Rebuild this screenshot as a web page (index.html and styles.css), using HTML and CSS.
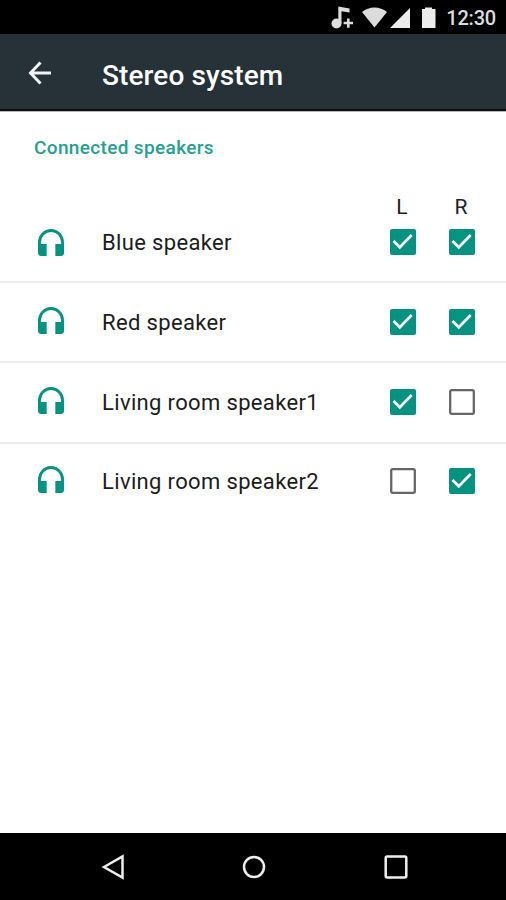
FILE: index.html
```html
<!DOCTYPE html>
<html lang="en">
<head>
    <meta charset="UTF-8">
    <meta name="viewport" content="width=device-width, initial-scale=1.0">
    <title>Stereo system</title>
    <link rel="stylesheet" href="styles.css">
</head>
<body>

    <!-- shared icons -->
    <svg class="symbols">
        <symbol id="headphones" viewBox="3 3 18 18" preserveAspectRatio="none">
            <path d="M12 3a9 9 0 0 0-9 9v7c0 1.1.9 2 2 2h4v-8H5v-1a7 7 0 0 1 14 0v1h-4v8h4c1.1 0 2-.9 2-2v-7a9 9 0 0 0-9-9z"/>
        </symbol>
        <symbol id="checked" viewBox="0 0 26 26">
            <rect width="26" height="26" rx="2" fill="#069281"/>
            <path d="M3.500 12l6.300 6.300L21.700 6" fill="none" stroke="#fff" stroke-width="2.700"/>
        </symbol>
        <symbol id="unchecked" viewBox="0 0 26 26">
            <rect x="1.200" y="1.200" width="23.600" height="23.600" rx="1.500" fill="none" stroke="#666" stroke-width="2.300"/>
        </symbol>
    </svg>

    <div class="screen">
        <div class="status-bar">
            <svg class="status-icons" width="108" height="34" viewBox="0 0 108 34">
                <g fill="#dcdcdc">
                    <circle cx="5.500" cy="23.500" r="5"/>
                    <path d="M7.300 6.500l11.200 2v4l-8-1.200V23.500H7.300z"/>
                    <path d="M16 18.500h2.600v3.200h3.400v2.600h-3.400v3.400H16v-3.400h-3.400v-2.600H16z"/>
                    <path d="M31 12C38 6 49 6 56 12L43.500 27.500z"/>
                </g>
                <path d="M79 8v20H59z" fill="#ececec"/>
                <path d="M91 9h3V7.500h7V9h3.500v19H91z" fill="#ececec"/>
            </svg>
            <span class="clock">12:30</span>
        </div>

        <div class="app-bar">
            <svg class="back" width="25" height="24" viewBox="0 0 25 24">
                <path d="M14.500 1.500L4.500 12l10 10.500M4.500 12h21.500" fill="none" stroke="#f0f2f3" stroke-width="3"/>
            </svg>
            <h1 class="title">Stereo system</h1>
        </div>

        <div class="content">
            <h2 class="subheader">Connected speakers</h2>

            <div class="channels">
                <span>L</span>
                <span>R</span>
            </div>

            <div class="speaker first">
                <svg class="headphones"><use href="#headphones"/></svg>
                <span class="name">Blue speaker</span>
                <svg class="box"><use href="#checked"/></svg>
                <svg class="box"><use href="#checked"/></svg>
            </div>
            <div class="speaker">
                <svg class="headphones"><use href="#headphones"/></svg>
                <span class="name">Red speaker</span>
                <svg class="box"><use href="#checked"/></svg>
                <svg class="box"><use href="#checked"/></svg>
            </div>
            <div class="speaker third">
                <svg class="headphones"><use href="#headphones"/></svg>
                <span class="name">Living room speaker1</span>
                <svg class="box"><use href="#checked"/></svg>
                <svg class="box"><use href="#unchecked"/></svg>
            </div>
            <div class="speaker last">
                <svg class="headphones"><use href="#headphones"/></svg>
                <span class="name">Living room speaker2</span>
                <svg class="box"><use href="#unchecked"/></svg>
                <svg class="box"><use href="#checked"/></svg>
            </div>
        </div>

        <div class="nav-bar">
            <svg width="24" height="26" viewBox="0 0 24 26">
                <path d="M3 13L21.500 2.500v21z"/>
            </svg>
            <svg width="24" height="26" viewBox="0 0 24 26">
                <circle cx="12" cy="13" r="10"/>
            </svg>
            <svg width="24" height="26" viewBox="0 0 24 26">
                <rect x="1.700" y="2.500" width="20.600" height="21" rx="1.500"/>
            </svg>
        </div>
    </div>

</body>
</html>
```
FILE: styles.css
```css
body {
    margin: 0;
    font-family: Roboto, "Liberation Sans", sans-serif;
}

.symbols {
    display: none;
}

.screen {
    display: flex;
    flex-direction: column;
    height: 900px;
    width: 506px;
    background-color: white;
    overflow: hidden;
}

.status-bar {
    display: flex;
    align-items: center;
    justify-content: flex-end;
    gap: 7px;
    height: 34px;
    padding-right: 10px;
    background-color: black;
}

.clock {
    color: #dcdcdc;
    font-size: 20px;
    font-weight: 500;
    letter-spacing: -0.2px;
    line-height: 34px;
    padding-top: 1px;
}

.app-bar {
    display: flex;
    align-items: center;
    box-sizing: border-box;
    height: 77px;
    padding-left: 26px;
    background-color: #263138;
    border-bottom: 2px solid #0b1013;
}

.back {
    margin-top: 3px;
}

.title {
    margin: 7px 0 0 51px;
    color: white;
    font-size: 28px;
    font-weight: 500;
    letter-spacing: 0.1px;
}

.content {
    flex: 1;
    border-top: 1px solid #b5b8ba;
}

.subheader {
    margin: 23px 0 0 34px;
    color: #26a08f;
    font-size: 19px;
    font-weight: 500;
    line-height: 26px;
    letter-spacing: 0.35px;
}

.channels {
    display: flex;
    justify-content: flex-end;
    gap: 33px;
    padding: 33px 32px 0 0;
    font-size: 21px;
    line-height: 26px;
    color: #222;
}

.channels span {
    width: 26px;
    text-align: center;
}

.speaker {
    display: grid;
    grid-template-columns: 64px 288px 59px 26px;
    align-items: center;
    box-sizing: border-box;
    height: 80px;
    padding-left: 38px;
    border-bottom: 2px solid #ececec;
}

.speaker.first {
    height: 63px;
    padding-bottom: 17px;
}

.speaker.third {
    height: 81px;
    padding-bottom: 1px;
}

.speaker.last {
    height: 74px;
    border-bottom: none;
}

.headphones {
    width: 26px;
    height: 27px;
    margin-bottom: 4px;
    fill: #069281;
}

.first .headphones {
    margin-bottom: 0;
}

.name {
    color: #1c1c1c;
    font-size: 22px;
    letter-spacing: 0.35px;
}

.box {
    width: 26px;
    height: 26px;
}

.nav-bar {
    display: flex;
    align-items: center;
    justify-content: space-between;
    box-sizing: border-box;
    height: 67px;
    padding: 0 98px 0 101px;
    background-color: black;
}

.nav-bar svg {
    fill: none;
    stroke: #eee;
    stroke-width: 2.500;
}

.nav-bar svg:nth-child(2) {
    margin-right: 2px;
}
```
